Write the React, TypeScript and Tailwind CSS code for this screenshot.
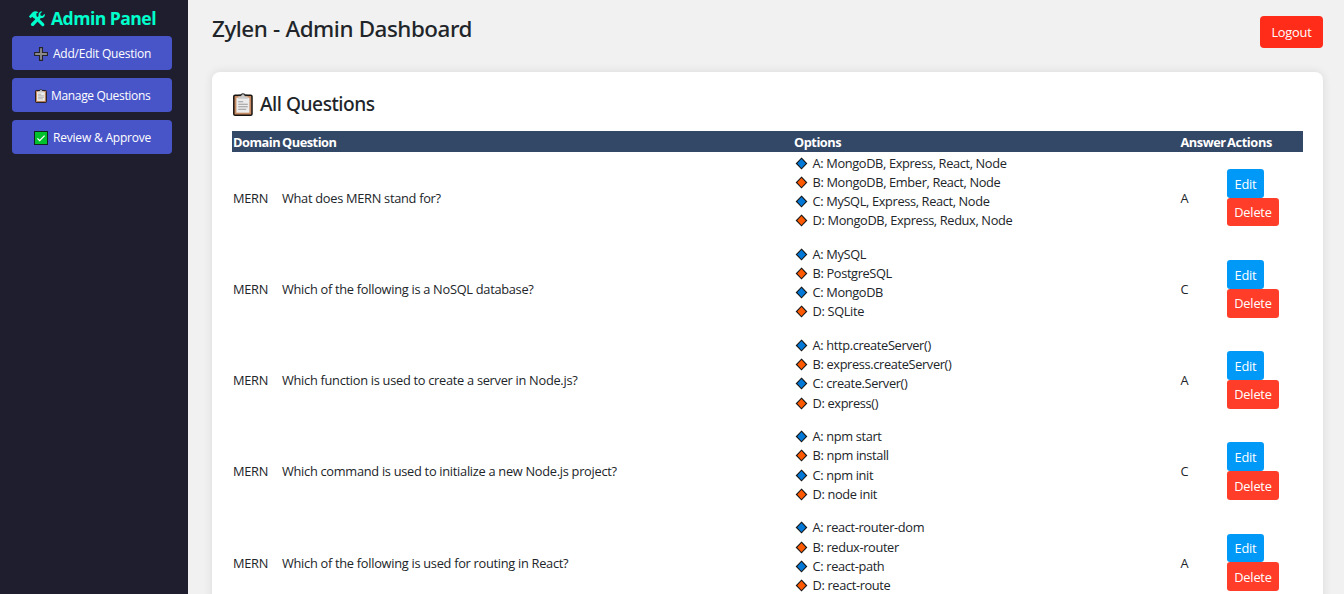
type Question = {
  text: string;
  options: string[];
  answer: string;
};

const questions: Question[] = [
  {
    text: "What does MERN stand for?",
    options: [
      "A: MongoDB, Express, React, Node",
      "B: MongoDB, Ember, React, Node",
      "C: MySQL, Express, React, Node",
      "D: MongoDB, Express, Redux, Node",
    ],
    answer: "A",
  },
  {
    text: "Which of the following is a NoSQL database?",
    options: ["A: MySQL", "B: PostgreSQL", "C: MongoDB", "D: SQLite"],
    answer: "C",
  },
  {
    text: "Which function is used to create a server in Node.js?",
    options: ["A: http.createServer()", "B: express.createServer()", "C: create.Server()", "D: express()"],
    answer: "A",
  },
  {
    text: "Which command is used to initialize a new Node.js project?",
    options: ["A: npm start", "B: npm install", "C: npm init", "D: node init"],
    answer: "C",
  },
  {
    text: "Which of the following is used for routing in React?",
    options: ["A: react-router-dom", "B: redux-router", "C: react-path", "D: react-route"],
    answer: "A",
  },
];

function ToolsIcon() {
  return (
    <svg width="18" height="18" viewBox="0 0 18 18" fill="none" stroke="#00ffcc">
      <path d="M14.4 1.5 12.2 3.8 12.6 5.6 14.4 6 16.7 3.8C17.4 6.4 15.5 8.4 12.9 8L6.2 15.2C4.4 17.4 1.6 14.8 3.6 12.9L10.6 6.1C10 3.3 11.8 1.1 14.4 1.5Z" fill="#00ffcc" stroke="none" />
      <path d="M.9 6.4 4.4 2.6C6.2 .9 8.7 1 10.4 2.5L8.2 3.4 8.6 5.4 5.8 8.2 4.2 6.8 2.6 8.2Z" fill="#00ffcc" stroke="none" />
      <path d="m7.6 7.4 7.2 7.2" strokeWidth="3.2" strokeLinecap="round" />
    </svg>
  );
}

function PlusIcon() {
  return (
    <svg width="14" height="14" viewBox="0 0 14 14">
      <path d="M5.5.6h3v4.9h4.9v3H8.5v4.9h-3V8.5H.6v-3h4.9Z" fill="#8d8b89" stroke="#25242b" strokeWidth="1.1" />
    </svg>
  );
}

function ClipboardIcon({ className }: { className: string }) {
  return (
    <svg className={className} viewBox="0 0 20 23">
      <rect x=".8" y="2.3" width="18.2" height="19.9" rx="1.3" fill="#c68a62" stroke="#171310" strokeWidth="1.5" />
      <path d="M3.4 4.7h13v15h-13Z" fill="#ececec" />
      <path d="M5.2 5.8V3.5h2.6C8.1.4 11.8.4 12.1 3.5h2.6v2.3Z" fill="#c9c9c9" />
      <path d="M5.8 2.3h2C8.3.2 11.7.2 12.2 2.3h2" fill="none" stroke="#222" strokeWidth="1.1" />
      <path d="M5.2 8.7h5M5.2 11.2h9.6M5.2 13.7h9.6M5.2 16.2h8" stroke="#999" strokeWidth="1.1" />
    </svg>
  );
}

function CheckIcon() {
  return (
    <svg width="14" height="14" viewBox="0 0 14 14">
      <rect x=".5" y=".5" width="13" height="13" fill="#00c22d" stroke="#10251b" />
      <path d="m3.4 7.4 2.3 2.2 4.9-5" fill="none" stroke="#fff" strokeWidth="1.3" />
    </svg>
  );
}

function Diamond({ blue }: { blue: boolean }) {
  return (
    <svg width="13" height="13" viewBox="0 0 13 13">
      <path d="m6.5 1.2 5.1 5.3-5.1 5.3-5.1-5.3Z" fill={blue ? "#0078d7" : "#ff5a00"} stroke="#151515" strokeWidth="1.1" />
    </svg>
  );
}

const navButton =
  "flex h-[34px] w-full items-center rounded bg-[#4855c8] pt-0.5 pl-[22px] text-left text-xs text-white";

function Sidebar() {
  return (
    <aside className="flex w-[188px] shrink-0 flex-col bg-[#1e1e2f] pt-[5px] pr-4 pl-3">
      <h2 className="flex h-[31px] items-start pl-4 text-[17.6px] leading-[26px] font-bold tracking-[-0.55px] text-[#00ffcc]">
        <span className="mr-[5px] pt-[5px]">
          <ToolsIcon />
        </span>
        Admin Panel
      </h2>
      <nav className="flex flex-col gap-2">
        <button className={navButton}>
          <PlusIcon />
          <span className="ml-[5px] tracking-[-0.24px]">Add/Edit Question</span>
        </button>
        <button className={navButton}>
          <ClipboardIcon className="ml-px h-[14px] w-3" />
          <span className="ml-[4px] tracking-[-0.33px]">Manage Questions</span>
        </button>
        <button className={navButton}>
          <CheckIcon />
          <span className="ml-[5px] tracking-[-0.2px]">Review &amp; Approve</span>
        </button>
      </nav>
    </aside>
  );
}

function QuestionsTable() {
  return (
    <table className="w-[1071px] table-fixed border-collapse text-[12.8px] leading-[19.2px] tracking-[-0.28px]">
      <colgroup>
        <col className="w-[49px]" />
        <col className="w-[512px]" />
        <col className="w-[386.5px]" />
        <col className="w-[46.5px]" />
        <col className="w-[77px]" />
      </colgroup>
      <thead className="bg-[#334766] text-left tracking-[-0.48px] whitespace-nowrap text-white">
        <tr className="h-[20.8px]">
          <th className="px-px pt-[1.6px] pb-0 font-bold">Domain</th>
          <th className="px-px pt-[1.6px] pb-0 font-bold">Question</th>
          <th className="px-px pt-[1.6px] pb-0 font-bold">Options</th>
          <th className="px-px pt-[1.6px] pb-0 font-bold">Answer</th>
          <th className="px-px pt-[1.6px] pb-0 font-bold tracking-[-0.38px]">Actions</th>
        </tr>
      </thead>
      <tbody>
        {questions.map((q) => (
          <tr key={q.text} className="h-[91.2px]">
            <td className="px-px pt-0.5 pb-0">MERN</td>
            <td className="px-px pt-0.5 pb-0">{q.text}</td>
            <td className="px-px py-0">
              <ul className="mt-px mb-[11.8px] tracking-[-0.36px]">
                {q.options.map((option, i) => (
                  <li key={option} className="flex h-[19.2px] items-center gap-[4.6px] pl-px">
                    <Diamond blue={i % 2 === 0} />
                    {option}
                  </li>
                ))}
              </ul>
            </td>
            <td className="px-px pt-0.5 pb-0">{q.answer}</td>
            <td className="px-px pt-[0.5px] pb-0">
              <div className="flex flex-col items-start tracking-[-0.2px] text-white">
                <button className="h-[28.8px] w-[37px] rounded-[3.2px] bg-[#0099f7] pt-0.5">Edit</button>
                <button className="h-[28.8px] w-[52px] rounded-[3.2px] bg-[#ff3d29] pt-[1.2px]">Delete</button>
              </div>
            </td>
          </tr>
        ))}
      </tbody>
    </table>
  );
}

export default function App() {
  return (
    <div className="flex h-[594px] w-[1344px] overflow-hidden bg-[#f1f1f1] font-['Open_Sans','Noto_Sans',sans-serif] text-[#212529]">
      <Sidebar />
      <main className="flex-1 pt-4 pr-[21px] pl-6">
        <header className="flex h-14 items-start justify-between">
          <h1 className="font-['Noto_Sans',sans-serif] text-[22.4px] leading-[25px] font-medium tracking-[-0.47px] [word-spacing:0.4px]">
            Zylen - Admin Dashboard
          </h1>
          <button className="h-8 w-[63px] rounded bg-[#ff2c19] pt-0.5 text-[12.8px] tracking-[-0.2px] text-white">
            Logout
          </button>
        </header>
        <section className="h-[600px] rounded-lg bg-white px-5 pt-5 shadow-[0_0_10px_rgba(0,0,0,0.1)]">
          <h2 className="flex h-[39px] items-start font-['Noto_Sans',sans-serif] text-[19.2px] leading-[24px] font-medium tracking-[-0.48px]">
            <ClipboardIcon className="mt-px mr-[7px] ml-px h-[23px] w-5" />
            All Questions
          </h2>
          <QuestionsTable />
        </section>
      </main>
    </div>
  );
}
